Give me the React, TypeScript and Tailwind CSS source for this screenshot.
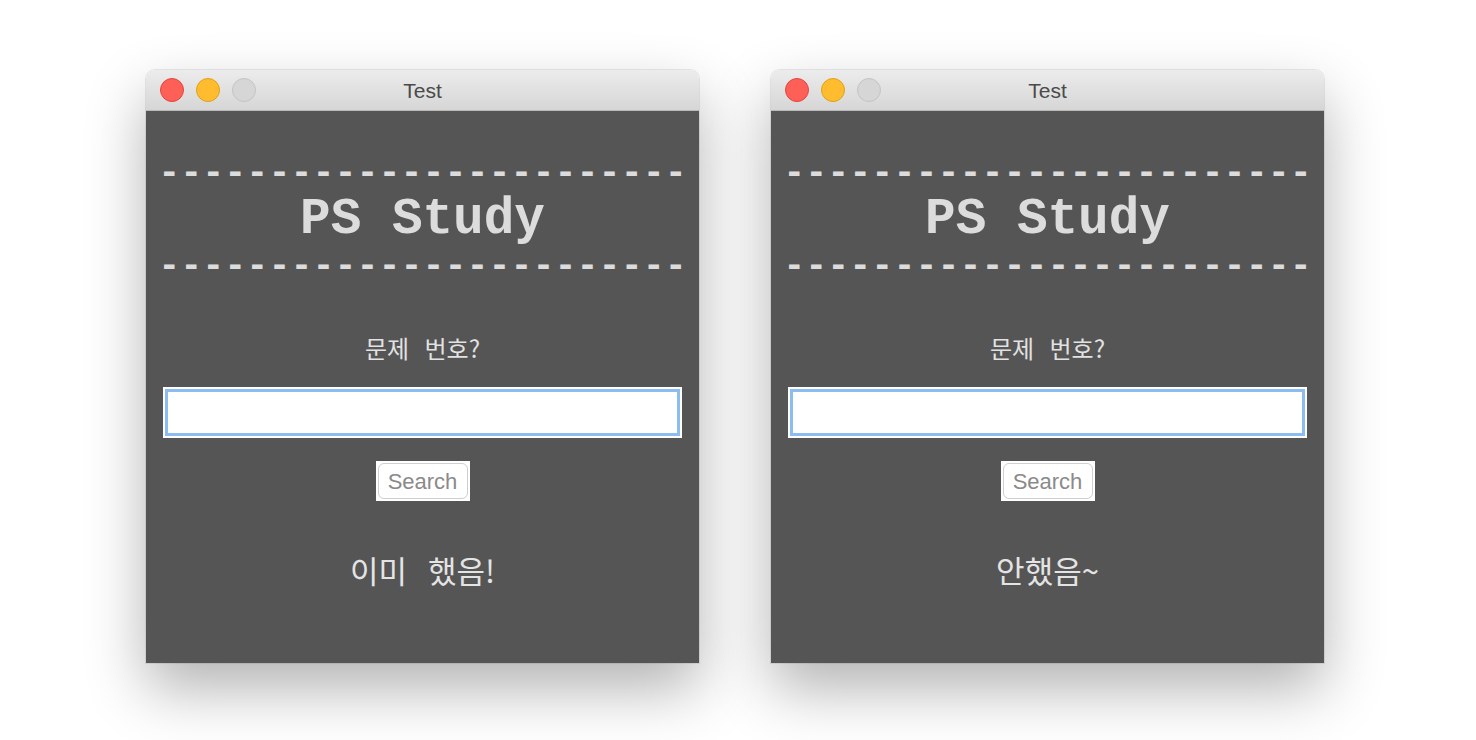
import { useState } from 'react';

const mono = { fontFamily: '"Courier New", "Liberation Mono", monospace' };
const kr = { fontFamily: '"Noto Sans CJK KR", "Noto Sans", sans-serif' };

const windows = [
  { id: 'done', result: '이미 했음!' },
  { id: 'notyet', result: '안했음~' },
];

function TitleBar() {
  return (
    <div className="relative flex h-[41px] items-center rounded-t-[9px] border-b border-[#b9b9b9] bg-gradient-to-b from-[#ececec] to-[#d6d6d6] px-[14px]">
      <div className="flex gap-[12px]">
        <span className="h-[24px] w-[24px] rounded-full border border-[#e2463f] bg-[#fe5f57]" />
        <span className="h-[24px] w-[24px] rounded-full border border-[#e1a116] bg-[#febc2e]" />
        <span className="h-[24px] w-[24px] rounded-full border border-[#c4c4c4] bg-[#d6d6d6]" />
      </div>
      <div
        className="absolute inset-x-0 top-0 flex h-full items-center justify-center pt-[2px] text-[21px] text-[#4a4a4a]"
        style={{ fontFamily: '"Liberation Sans", Arial, sans-serif' }}
      >
        Test
      </div>
    </div>
  );
}

function Window({ result }: { result: string }) {
  const [value, setValue] = useState('');
  const dashes = '-'.repeat(24);

  return (
    <div className="w-[553px] rounded-t-[9px] shadow-[0_26px_60px_rgba(0,0,0,0.3),0_0_0_1px_rgba(0,0,0,0.08)]">
      <TitleBar />
      <div className="flex h-[552px] flex-col items-center bg-[#555555] text-[#dcdcdc]">
        <div className="mt-[44px] text-[36.7px] font-bold leading-none" style={mono}>
          {dashes}
        </div>
        <div className="mt-[2px] text-[51px] font-bold leading-none" style={mono}>
          PS Study
        </div>
        <div className="mt-[3px] text-[36.7px] font-bold leading-none" style={mono}>
          {dashes}
        </div>
        <div className="mt-[52px] text-[24px] leading-none text-[#e2e2e2] [word-spacing:10px]" style={kr}>
          문제 번호?
        </div>
        <div className="mt-[27px] w-[519px] bg-white p-[2px]">
          <input
            value={value}
            onChange={(e) => setValue(e.target.value)}
            className="block h-[47px] w-full border-[3px] border-[#8dbcf0] bg-white px-2 text-[20px] outline-none"
          />
        </div>
        <div className="mt-[23px] bg-white p-[2px]">
          <button
            className="flex h-[36px] w-[90px] items-center justify-center rounded-[6px] border border-[#cfcfcf] bg-white text-[22px] text-[#8a8a8a]"
            style={{ fontFamily: '"Liberation Sans", Arial, sans-serif' }}
          >
            Search
          </button>
        </div>
        <div className="mt-[53px] text-[31px] leading-none text-[#e4e4e4] [word-spacing:14px]" style={kr}>
          {result}
        </div>
      </div>
    </div>
  );
}

export default function App() {
  return (
    <div className="min-h-screen w-full bg-white">
      <div className="flex gap-[72px] pl-[146px] pt-[70px]">
        {windows.map((w) => (
          <Window key={w.id} result={w.result} />
        ))}
      </div>
    </div>
  );
}
